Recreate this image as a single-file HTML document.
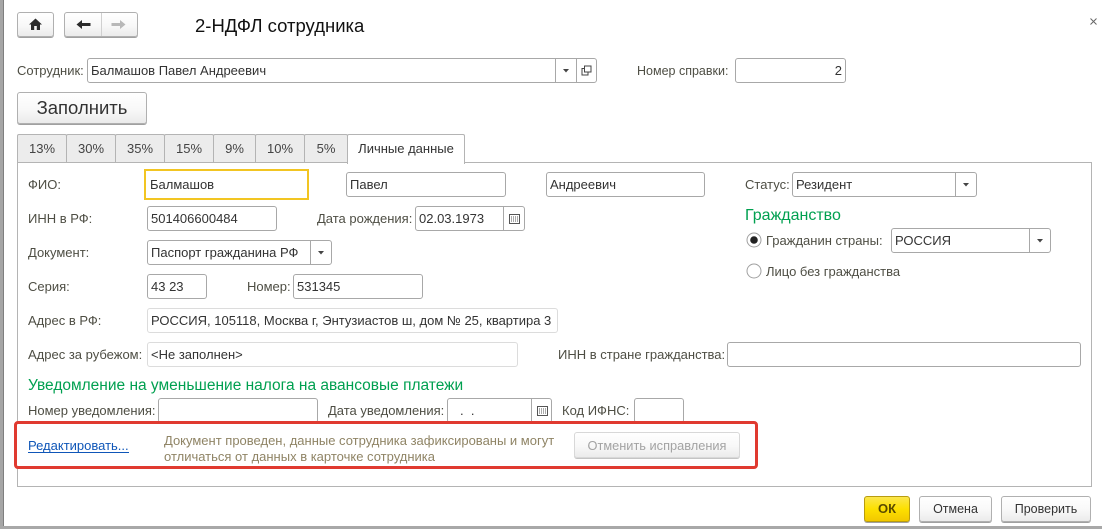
<!DOCTYPE html>
<html lang="ru"><head><meta charset="utf-8"><title>2-НДФЛ сотрудника</title>
<style>
html,body{margin:0;padding:0;background:#fff}
#p{position:relative;width:1102px;height:529px;overflow:hidden;background:#fff;font-family:"Liberation Sans",Arial,sans-serif;font-size:13px;color:#4a4a40}
#p div,#p svg{position:absolute;box-sizing:border-box}
.t{white-space:nowrap;line-height:16px;height:16px}
.l{color:#4e4e44}
.f{border:1px solid #a8a8a8;border-radius:3px;background:#fff;color:#333;white-space:nowrap;line-height:23px;padding-left:3px;height:25px}
.q{border-color:#dcdcdc}
.d{width:1px;background:#a8a8a8;top:0;bottom:0}
.b{border:1px solid #b0b0b0;border-radius:3px;background:linear-gradient(#fff,#f8f8f8 55%,#ebebeb);box-shadow:0 1px 0 #a0a0a0;text-align:center;color:#333;white-space:nowrap}
.tab{top:134px;height:29px;background:#ececec;border:1px solid #b4b4b4;text-align:center;line-height:27px;color:#444;border-radius:2px 2px 0 0}
.g{color:#00a050;line-height:18px;height:18px;white-space:nowrap}
</style></head><body>
<div id="p">
<div style="left:0;top:0;width:4px;height:529px;background:#a6a6a6;border-right:1px solid #7f7f7f"></div>
<div style="left:0;top:526px;width:1102px;height:3px;background:#a8a8a8"></div>

<div class="b" style="left:17px;top:12px;width:37px;height:25px"></div>
<svg style="left:28px;top:18px" width="15" height="13" viewBox="0 0 15 13"><path d="M7.500 0.500L1 6.500h2V12h3.200V8h2.600v4H12V6.500h2z" fill="#2b2b2b"/></svg>
<div class="b" style="left:64px;top:12px;width:74px;height:25px"><div class="d" style="left:36px;background:#d0d0d0"></div></div>
<svg style="left:76px;top:19px" width="15" height="11" viewBox="0 0 15 11"><path d="M0.500 5.500L6 1v3h8.500v3H6v3z" fill="#2b2b2b"/></svg>
<svg style="left:111px;top:19px" width="15" height="11" viewBox="0 0 15 11"><path d="M14.500 5.500L9 1v3H0.500v3H9v3z" fill="#b8b8b8"/></svg>
<div class="t" style="left:195px;top:15px;font-size:18.500px;line-height:22px;height:22px;color:#111">2-НДФЛ сотрудника</div>
<svg style="left:1090px;top:18px" width="7" height="7" viewBox="0 0 7 7"><path d="M.5.500l6 6M6.500.500l-6 6" stroke="#666" stroke-width="1"/></svg>

<div class="t l" style="left:17px;top:63px">Сотрудник:</div>
<div class="f" style="left:87px;top:58px;width:510px">Балмашов Павел Андреевич
<div class="d" style="left:467px"></div><div class="d" style="left:488px"></div></div>
<svg style="left:563px;top:69px" width="6" height="4" viewBox="0 0 6 4"><path d="M0 0h6L3 3.500z" fill="#444"/></svg>
<svg style="left:581px;top:65px" width="11" height="11" viewBox="0 0 11 11"><path d="M3.500 3.500H1v6.500h6V7.500M3.500 1h6.500v6H3.500z" fill="none" stroke="#444"/></svg>
<div class="t l" style="left:637px;top:63px;font-size:12.500px">Номер справки:</div>
<div class="f" style="left:735px;top:58px;width:111px;text-align:right;padding-right:3px">2</div>

<div class="b" style="left:17px;top:92px;width:130px;height:32px;font-size:18.500px;line-height:30px">Заполнить</div>

<div style="left:17px;top:162px;width:1075px;height:325px;border:1px solid #b4b4b4"></div>
<div class="tab" style="left:17px;width:50px">13%</div>
<div class="tab" style="left:66px;width:50px">30%</div>
<div class="tab" style="left:115px;width:50px">35%</div>
<div class="tab" style="left:164px;width:50px">15%</div>
<div class="tab" style="left:213px;width:43px">9%</div>
<div class="tab" style="left:255px;width:50px">10%</div>
<div class="tab" style="left:304px;width:44px">5%</div>
<div class="tab" style="left:347px;width:118px;background:#fff;border-bottom:0;height:30px;line-height:28px;color:#333">Личные данные</div>

<div class="t l" style="left:28px;top:177px">ФИО:</div>
<div class="f" style="left:144px;top:169px;width:165px;height:31px;border:2px solid #f2c522;border-radius:0;line-height:27px;padding-left:4px">Балмашов</div>
<div class="f" style="left:346px;top:172px;width:160px">Павел</div>
<div class="f" style="left:546px;top:172px;width:159px">Андреевич</div>
<div class="t l" style="left:745px;top:177px">Статус:</div>
<div class="f" style="left:792px;top:172px;width:185px">Резидент<div class="d" style="left:162px"></div></div>
<svg style="left:963px;top:183px" width="6" height="4" viewBox="0 0 6 4"><path d="M0 0h6L3 3.500z" fill="#444"/></svg>

<div class="g" style="left:745px;top:207px;font-size:16px">Гражданство</div>
<svg style="left:746px;top:232px" width="16" height="16" viewBox="0 0 16 16"><circle cx="8" cy="8" r="7" fill="#fff" stroke="#a0a0a0"/><circle cx="8" cy="8" r="3.800" fill="#222"/></svg>
<div class="t l" style="left:766px;top:233px">Гражданин страны:</div>
<div class="f" style="left:891px;top:228px;width:160px">РОССИЯ<div class="d" style="left:137px"></div></div>
<svg style="left:1037px;top:239px" width="6" height="4" viewBox="0 0 6 4"><path d="M0 0h6L3 3.500z" fill="#444"/></svg>
<svg style="left:746px;top:263px" width="16" height="16" viewBox="0 0 16 16"><circle cx="8" cy="8" r="7" fill="#fff" stroke="#a0a0a0"/></svg>
<div class="t l" style="left:766px;top:264px">Лицо без гражданства</div>

<div class="t l" style="left:28px;top:211px">ИНН в РФ:</div>
<div class="f" style="left:147px;top:206px;width:130px">501406600484</div>
<div class="t l" style="left:317px;top:211px">Дата рождения:</div>
<div class="f" style="left:415px;top:206px;width:110px">02.03.1973<div class="d" style="left:87px"></div></div>
<svg style="left:509px;top:214px" width="11" height="10" viewBox="0 0 11 10"><rect x=".5" y=".5" width="10" height="9" fill="none" stroke="#555"/><path d="M2 3h7M2 5h7M2 7h7" stroke="#555" stroke-dasharray="1 1"/></svg>

<div class="t l" style="left:28px;top:245px">Документ:</div>
<div class="f" style="left:147px;top:240px;width:185px">Паспорт гражданина РФ<div class="d" style="left:162px"></div></div>
<svg style="left:318px;top:251px" width="6" height="4" viewBox="0 0 6 4"><path d="M0 0h6L3 3.500z" fill="#444"/></svg>

<div class="t l" style="left:28px;top:279px">Серия:</div>
<div class="f" style="left:147px;top:274px;width:60px">43 23</div>
<div class="t l" style="left:247px;top:279px">Номер:</div>
<div class="f" style="left:293px;top:274px;width:130px">531345</div>

<div class="t l" style="left:28px;top:313px">Адрес в РФ:</div>
<div class="f q" style="left:147px;top:308px;width:411px;overflow:hidden">РОССИЯ, 105118, Москва г, Энтузиастов ш, дом № 25, квартира 3</div>

<div class="t l" style="left:28px;top:347px">Адрес за рубежом:</div>
<div class="f q" style="left:147px;top:342px;width:371px">&lt;Не заполнен&gt;</div>
<div class="t l" style="left:558px;top:347px">ИНН в стране гражданства:</div>
<div class="f" style="left:727px;top:342px;width:354px"></div>

<div class="g" style="left:28px;top:377px;font-size:15.500px">Уведомление на уменьшение налога на авансовые платежи</div>

<div class="t l" style="left:28px;top:403px">Номер уведомления:</div>
<div class="f" style="left:158px;top:398px;width:160px"></div>
<div class="t l" style="left:328px;top:403px">Дата уведомления:</div>
<div class="f" style="left:447px;top:398px;width:105px;padding-left:12px">.&nbsp;&nbsp;.<div class="d" style="left:83px"></div></div>
<svg style="left:537px;top:406px" width="11" height="10" viewBox="0 0 11 10"><rect x=".5" y=".5" width="10" height="9" fill="none" stroke="#555"/><path d="M2 3h7M2 5h7M2 7h7" stroke="#555" stroke-dasharray="1 1"/></svg>
<div class="t l" style="left:562px;top:403px">Код ИФНС:</div>
<div class="f" style="left:634px;top:398px;width:50px"></div>

<div style="left:14px;top:421px;width:744px;height:48px;background:#fff;border:3px solid #e03a30;border-radius:4px"></div>
<div class="t" style="left:28px;top:438px;color:#0f56b8;border-bottom:1px solid #0f56b8;height:15px;line-height:15px">Редактировать...</div>
<div class="t" style="left:164px;top:433px;color:#8f8465">Документ проведен, данные сотрудника зафиксированы и могут</div>
<div class="t" style="left:164px;top:449px;color:#8f8465">отличаться от данных в карточке сотрудника</div>
<div class="b" style="left:574px;top:432px;width:166px;height:26px;line-height:25px;font-size:12.800px;color:#a3a3a3;border-color:#d8d8d8;box-shadow:0 1px 0 #c4c4c4">Отменить исправления</div>

<div class="b" style="left:864px;top:496px;width:46px;height:26px;line-height:24px;font-weight:bold;color:#5a4a00;background:linear-gradient(#fbe64c,#fde000 50%,#f2c800);border-color:#b89c10">ОК</div>
<div class="b" style="left:919px;top:496px;width:73px;height:26px;line-height:24px;font-size:12.500px">Отмена</div>
<div class="b" style="left:1001px;top:496px;width:90px;height:26px;line-height:24px;font-size:12.500px">Проверить</div>
</div>
</body></html>
